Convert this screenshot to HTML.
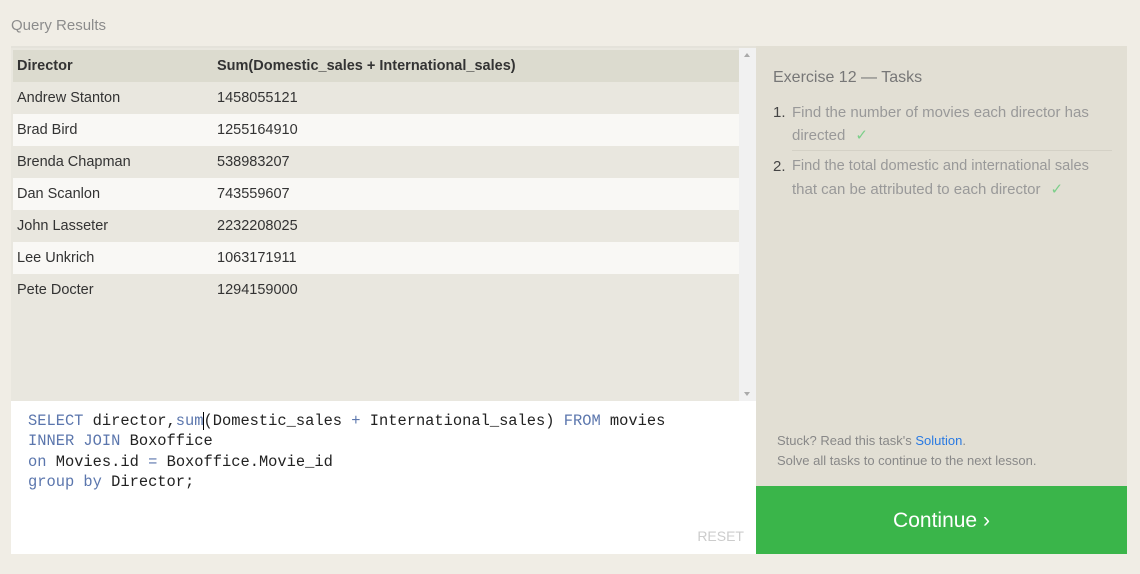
<!DOCTYPE html>
<html><head><style>
body{margin:0;width:1140px;height:574px;background:#f0ede5;font-family:"Liberation Sans",sans-serif;position:relative;overflow:hidden}
.t{position:absolute;left:11px;top:17px;font-size:15px;color:#8c8c8c}
.tbl{position:absolute;left:11px;top:46px;width:745px;height:355px;background:#e9e7df;border-top:2px solid #e4e2da}
.row{position:absolute;left:2px;width:726px;height:32px;font-size:14.5px;color:#333;line-height:32px}
.row span{position:absolute}
.c1{left:4px}.c2{left:204px}
.hd{background:#dcdbcf;font-weight:bold;color:#333}
.o{background:#e9e7df;border-bottom:1px solid #dcdad2}
.e{background:#f9f8f5;border-bottom:1px solid #e2e0d8}
.sb{position:absolute;left:728px;top:0;width:17px;height:355px;background:#f1f1f1}
.ed{position:absolute;left:11px;top:401px;width:745px;height:153px;background:#fff}
pre{margin:0;position:absolute;left:17px;top:10px;font-family:"Liberation Mono",monospace;font-size:15.4px;line-height:20.3px;color:#222}
.k{color:#5b76ad}
.rs{position:absolute;right:12px;bottom:10px;font-size:14px;color:#ccc}
.rp{position:absolute;left:756px;top:46px;width:371px;height:440px;background:#e2dfd4}
.rp h3{position:absolute;left:17px;top:23px;margin:0;font-weight:normal;font-size:16px;color:#777}
.ln{position:absolute;left:36px;font-size:15px;color:#999;white-space:nowrap;line-height:23px}
.nm{position:absolute;left:17px;font-size:15px;color:#444;line-height:23px}
.ck{color:#7ccf8a;margin-left:10px}
.st{position:absolute;left:777px;top:431px;font-size:13px;line-height:20px;color:#888}
.st a{color:#2a7ae2}
.btn{position:absolute;left:756px;top:486px;width:371px;height:68px;background:#3ab54a;color:#fff;font-size:21px;text-align:center;line-height:70px}
</style></head><body>
<div class="t">Query Results</div>
<div class="tbl">
<div class="row hd" style="top:2px"><span class="c1">Director</span><span class="c2">Sum(Domestic_sales + International_sales)</span></div>
<div class="row o" style="top:34px"><span class="c1">Andrew Stanton</span><span class="c2">1458055121</span></div>
<div class="row e" style="top:66px"><span class="c1">Brad Bird</span><span class="c2">1255164910</span></div>
<div class="row o" style="top:98px"><span class="c1">Brenda Chapman</span><span class="c2">538983207</span></div>
<div class="row e" style="top:130px"><span class="c1">Dan Scanlon</span><span class="c2">743559607</span></div>
<div class="row o" style="top:162px"><span class="c1">John Lasseter</span><span class="c2">2232208025</span></div>
<div class="row e" style="top:194px"><span class="c1">Lee Unkrich</span><span class="c2">1063171911</span></div>
<div class="row o" style="top:226px;border:0"><span class="c1">Pete Docter</span><span class="c2">1294159000</span></div>
<div class="sb"><div style="position:absolute;left:5px;top:5px;border:3px solid transparent;border-bottom:4px solid #aaa;border-top:0"></div><div style="position:absolute;left:5px;bottom:7px;border:3px solid transparent;border-top:4px solid #aaa;border-bottom:0"></div></div>
</div>
<div class="ed"><pre><span class="k">SELECT</span> director,<span class="k">sum</span><span style="border-left:1.5px solid #000;margin-left:-1px"></span>(Domestic_sales <span class="k">+</span> International_sales) <span class="k">FROM</span> movies
<span class="k">INNER JOIN</span> Boxoffice
<span class="k">on</span> Movies.id <span class="k">=</span> Boxoffice.Movie_id
<span class="k">group by</span> Director;</pre><div class="rs">RESET</div></div>
<div class="rp"><h3>Exercise 12 — Tasks</h3>
<div class="nm" style="top:55px">1.</div>
<div class="ln" style="top:55px">Find the number of movies each director has</div>
<div class="ln" style="top:78px">directed<span class="ck">✓</span></div>
<div style="position:absolute;left:36px;top:104px;width:320px;border-top:1px solid #d4d1c6"></div>
<div class="nm" style="top:109px">2.</div>
<div class="ln" style="top:109px;font-size:14.6px">Find the total domestic and international sales</div>
<div class="ln" style="top:132px">that can be attributed to each director<span class="ck">✓</span></div>
</div>
<div class="st">Stuck? Read this task's <a>Solution</a>.<br>Solve all tasks to continue to the next lesson.</div>
<div class="btn">Continue ›</div>
</body></html>
